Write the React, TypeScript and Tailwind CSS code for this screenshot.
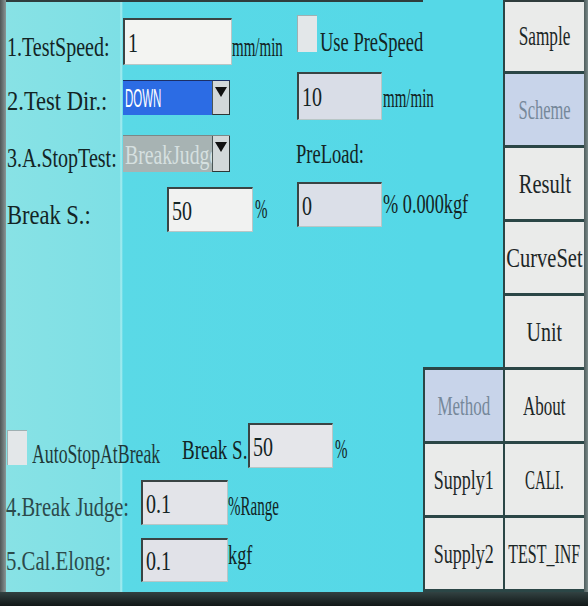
import React from "react";

// Test setup screen of a tensile tester panel (cyan HMI)

const T = ({ children, s = "scale-x-[0.8]", o = "origin-left" }: { children: React.ReactNode; s?: string; o?: string }) => (
  <span className={`inline-block whitespace-nowrap leading-none scale-y-[1.1] ${o} ${s}`}>{children}</span>
);

const Field = ({ value, className = "" }: { value: string; className?: string }) => (
  <div
    className={`shrink-0 flex items-center pl-[3px] overflow-hidden border-t-2 border-l-2 border-t-[#3a4444] border-l-[#3a4444] border-r border-b border-r-[#b8c6c6] border-b-[#b8c6c6] ${className}`}
  >
    <T>{value}</T>
  </div>
);

const Arrow = () => (
  <div className="w-[18px] shrink-0 flex justify-center pt-[6px] bg-[#d2d8d9] border-l border-[#4a5656] border-r border-b border-r-[#2c3636] border-b-[#2c3636]">
    <svg width="12" height="10" viewBox="0 0 12 10">
      <polygon points="0,0 12,0 6,10" fill="#111" />
    </svg>
  </div>
);

const CheckBox = ({ className = "" }: { className?: string }) => (
  <div className={`shrink-0 w-[20px] bg-[#e3e7e9] border-l border-t border-[#9fb0b2] ${className}`} />
);

const NavButton = ({ label, s, off = false, className = "" }: { label: string; s: string; off?: boolean; className?: string }) => (
  <div
    className={`h-[74px] shrink-0 flex items-center justify-center border-l-2 border-b-[3px] border-[#2b4646] ${
      off ? "bg-[#c8d4ea] text-[#76889a]" : "bg-[#eaebea] text-[#1c2626]"
    } ${className}`}
  >
    <T s={s} o="origin-center">
      {label}
    </T>
  </div>
);

export default function App() {
  return (
    <div className="w-[588px] h-[606px] flex flex-col bg-[#1b2424] font-['Liberation_Serif',serif] text-[25px] text-[#132424]">
      <div className="flex h-[592px]">
        {/* left bezel */}
        <div className="w-[6px] shrink-0 bg-gradient-to-r from-[#4f5757] to-[#8a9797]" />

        {/* form area */}
        <main className="w-[417px] shrink-0 flex flex-col pb-[10px] shadow-[inset_0_2px_0_#2f3d3d] bg-[linear-gradient(to_right,#88e2e5_0px,#7ddfe5_114px,#b0eff1_115px,#5ad9e6_117px,#55d8e7_100%)]">
          {/* 1 */}
          <div className="mt-[15px] h-[52px] flex items-start">
            <div className="w-[117px] shrink-0 h-full flex items-center pt-[10px] pl-px">
              <T s="scale-x-[0.8]">1.TestSpeed:</T>
            </div>
            <Field value="1" className="mt-[3px] w-[109px] h-[47px] bg-[#f3f4f2]" />
            <div className="w-[65px] shrink-0 h-full flex items-center pt-[10px]">
              <T s="scale-x-[0.6]">mm/min</T>
            </div>
            <CheckBox className="h-[37px]" />
            <div className="ml-[3px] shrink-0 h-full flex items-center">
              <T s="scale-x-[0.74]">Use PreSpeed</T>
            </div>
          </div>

          {/* 2 */}
          <div className="h-[53px] flex items-start">
            <div className="w-[117px] shrink-0 h-full flex items-center pt-[13px] pl-px">
              <T s="scale-x-[0.9]">2.Test Dir.:</T>
            </div>
            <div className="mt-[13px] w-[107px] h-[35px] shrink-0 flex bg-[#2c6ce4] border-t border-[#1b2f66]">
              <div className="flex-1 overflow-hidden flex items-center pl-[2px] text-white font-['Liberation_Sans',sans-serif] text-[23px]">
                <T s="scale-x-[0.5]">DOWN</T>
              </div>
              <Arrow />
            </div>
            <Field value="10" className="ml-[67px] mt-[5px] w-[85px] h-[48px] bg-[#d9dde7]" />
            <div className="shrink-0 h-full flex items-center pt-[8px] pl-px">
              <T s="scale-x-[0.6]">mm/min</T>
            </div>
          </div>

          {/* 3 */}
          <div className="h-[55px] flex items-start">
            <div className="w-[117px] shrink-0 h-full flex items-center pt-[19px] pl-px">
              <T s="scale-x-[0.8]">3.A.StopTest:</T>
            </div>
            <div className="mt-[15px] w-[107px] h-[37px] shrink-0 flex bg-[#a7b3b3] border-t border-[#7b8888]">
              <div className="flex-1 overflow-hidden flex items-center pl-[2px] text-[#d6e0e0]">
                <T s="scale-x-[0.79]">BreakJudge</T>
              </div>
              <Arrow />
            </div>
            <div className="ml-[66px] shrink-0 h-full flex items-center pt-[11px]">
              <T s="scale-x-[0.74]">PreLoad:</T>
            </div>
          </div>

          {/* Break S. */}
          <div className="h-[60px] flex items-start">
            <div className="w-[161px] shrink-0 h-full flex items-center pt-[18px] pl-px">
              <T s="scale-x-[0.9]">Break S.:</T>
            </div>
            <Field value="50" className="mt-[12px] w-[86px] h-[45px] bg-[#f1f2f1]" />
            <div className="w-[44px] shrink-0 h-full flex items-center pt-[6px] pl-[2px]">
              <T s="scale-x-[0.6]">%</T>
            </div>
            <Field value="0" className="mt-[7px] w-[85px] h-[45px] bg-[#dbdfe8]" />
            <div className="shrink-0 h-full flex items-center pb-[4px] pl-px">
              <T s="scale-x-[0.73]">% 0.000kgf</T>
            </div>
          </div>

          {/* bottom block */}
          <div className="mt-auto h-[45px] flex items-start">
            <CheckBox className="ml-px mt-[7px] h-[35px]" />
            <div className="ml-[5px] w-[150px] shrink-0 h-full flex items-center pt-[16px] text-[#1f3838]">
              <T s="scale-x-[0.71]">AutoStopAtBreak</T>
            </div>
            <div className="w-[66px] shrink-0 h-full flex items-center pt-[7px]">
              <T s="scale-x-[0.76]">Break S.</T>
            </div>
            <Field value="50" className="w-[85px] h-[45px] bg-[#e5e6ea]" />
            <div className="ml-[2px] shrink-0 h-full flex items-center pt-[6px]">
              <T s="scale-x-[0.6]">%</T>
            </div>
          </div>

          <div className="mt-[12px] h-[45px] flex items-start">
            <div className="w-[135px] shrink-0 h-full flex items-center pt-[7px] text-[#2c4a4b]">
              <T s="scale-x-[0.82]">4.Break Judge:</T>
            </div>
            <Field value="0.1" className="w-[87px] h-[45px] bg-[#e3e4e9]" />
            <div className="shrink-0 h-full flex items-center pt-[5px]">
              <T s="scale-x-[0.6]">%Range</T>
            </div>
          </div>

          <div className="mt-[13px] h-[44px] flex items-start">
            <div className="w-[135px] shrink-0 h-full flex items-center text-[#2c4a4b]">
              <T s="scale-x-[0.83]">5.Cal.Elong:</T>
            </div>
            <Field value="0.1" className="w-[87px] h-[44px] bg-[#e1e2e8]" />
            <div className="shrink-0 h-full flex items-center pb-[11px]">
              <T s="scale-x-[0.73]">kgf</T>
            </div>
          </div>
        </main>

        {/* menu buttons */}
        <nav className="w-[161px] shrink-0 flex bg-[#55d8e7]">
          <div className="w-[80px] shrink-0 flex flex-col justify-end">
            <NavButton label="Method" s="scale-x-[0.68]" off className="h-[77px] border-t-[3px]" />
            <NavButton label="Supply1" s="scale-x-[0.72]" />
            <NavButton label="Supply2" s="scale-x-[0.72]" />
          </div>
          <div className="w-[81px] shrink-0 flex flex-col">
            <NavButton label="Sample" s="scale-x-[0.69]" className="shadow-[inset_0_2px_0_#2f3d3d]" />
            <NavButton label="Scheme" s="scale-x-[0.66]" off />
            <NavButton label="Result" s="scale-x-[0.82]" />
            <NavButton label="CurveSet" s="scale-x-[0.82]" />
            <NavButton label="Unit" s="scale-x-[0.8]" />
            <NavButton label="About" s="scale-x-[0.68]" />
            <NavButton label="CALI." s="scale-x-[0.6]" />
            <NavButton label="TEST_INF" s="scale-x-[0.64]" />
          </div>
        </nav>

        {/* right bezel */}
        <div className="w-[4px] shrink-0 bg-gradient-to-r from-[#4e5c5c] to-[#7b8a8a]" />
      </div>
      {/* bottom bezel */}
      <div className="h-[14px] bg-gradient-to-b from-[#324242] to-[#121818]" />
    </div>
  );
}
